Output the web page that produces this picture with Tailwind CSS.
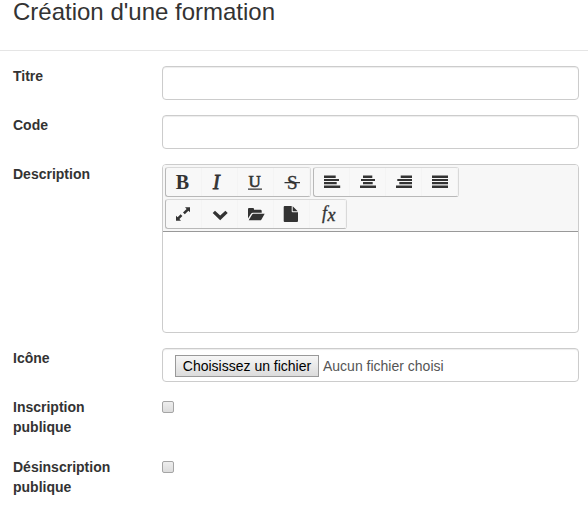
<!DOCTYPE html>
<html lang="fr">
<head>
<meta charset="utf-8">
<title>Création d'une formation</title>
<script src="https://cdn.jsdelivr.net/npm/@tailwindcss/browser@4"></script>
</head>
<body class="h-[505px] overflow-hidden bg-white font-['Liberation_Sans',Arial,sans-serif] text-sm leading-5 text-[#333]">
<header class="h-[51px] border-b border-[#e5e5e5] pl-[13px]">
  <h1 class="text-2xl leading-[24px]">Création d'une formation</h1>
</header>
<form class="flex flex-col gap-[15px] pt-[15px] pr-[9px] pl-[13px]">
  <div class="flex">
    <label class="w-[149px] shrink-0 font-bold">Titre</label>
    <input type="text" class="h-[34px] w-[417px] rounded border border-[#ccc] px-3 shadow-[inset_0_1px_1px_rgba(0,0,0,0.075)]">
  </div>
  <div class="flex">
    <label class="w-[149px] shrink-0 font-bold">Code</label>
    <input type="text" class="h-[34px] w-[417px] rounded border border-[#ccc] px-3 shadow-[inset_0_1px_1px_rgba(0,0,0,0.075)]">
  </div>
  <div class="flex">
    <label class="w-[149px] shrink-0 font-bold">Description</label>
    <div class="h-[169px] w-[417px] overflow-hidden rounded border border-[#ccc] bg-white">
      <div class="flex h-[67px] flex-wrap content-start gap-[2px] border-b border-[#999] bg-[#f7f7f7] p-[2px]">
        <div class="flex h-[30px] w-[146px] rounded-[3px] border border-[#d9d9d9] border-b-[#b8b8b8] border-l-[#b8b8b8] bg-[#f8f8f8] fill-[#333] [&>svg]:shadow-[inset_-1px_0_#f4f4f4]">
          <svg class="h-7 w-9" viewBox="0 0 36 28"><text x="9.800" y="21" class="font-['Liberation_Serif',serif] text-[20px] font-bold">B</text></svg>
          <svg class="h-7 w-9" viewBox="0 0 36 28"><text x="11" y="21" class="font-['Liberation_Serif',serif] text-[20px] italic" stroke="#333" stroke-width=".8">I</text></svg>
          <svg class="h-7 w-9" viewBox="0 0 36 28"><text x="10.500" y="19" class="font-['Liberation_Serif',serif] text-[17px]" stroke="#333" stroke-width=".6">U</text><path d="M10 20.500h14v1.200H10z"/></svg>
          <svg class="h-7 w-9" viewBox="0 0 36 28"><text x="13" y="20.500" class="font-['Liberation_Serif',serif] text-[19px]" stroke="#333" stroke-width=".4">S</text><path d="M10.500 14h15.500v1.200H10.500z"/></svg>
        </div>
        <div class="flex h-[30px] w-[146px] rounded-[3px] border border-[#d9d9d9] border-b-[#b8b8b8] border-l-[#b8b8b8] bg-[#f8f8f8] fill-[#333] [&>svg]:shadow-[inset_-1px_0_#f4f4f4]">
          <svg class="h-7 w-9" viewBox="0 0 36 28"><path d="M10 7.500h11.700V10H10zM10 11h15v2H10zM10 14h12.700v2.200H10zM10 17.500h16.200V20H10z"/></svg>
          <svg class="h-7 w-9" viewBox="0 0 36 28"><path d="M13 7.500h9.300V10H13zM11 11h14v2H11zM13 14h9.700v2.200H13zM10 17.500h16V20H10z"/></svg>
          <svg class="h-7 w-9" viewBox="0 0 36 28"><path d="M14.700 7.500H26V10H14.700zM11.300 11H26v2H11.300zM13.300 14H26v2.200H13.300zM10 17.500h16V20H10z"/></svg>
          <svg class="h-7 w-9" viewBox="0 0 36 28"><path d="M10 7.500h16V10H10zM10 11h16v2H10zM10 14h16v2.200H10zM10 17.500h16V20H10z"/></svg>
        </div>
        <div class="flex h-[30px] w-[182px] rounded-[3px] border border-[#d9d9d9] border-b-[#b8b8b8] border-l-[#b8b8b8] bg-[#f8f8f8] fill-[#333] [&>svg]:shadow-[inset_-1px_0_#f4f4f4]">
          <svg class="h-7 w-9" viewBox="0 0 36 28"><path d="M19 7.300h5v5l-1.600-1.600-3.600 3.600-1.800-1.800 3.600-3.600zM10 20.700v-5l1.600 1.600 3-3 1.800 1.800-3 3 1.600 1.600z"/></svg>
          <svg class="h-7 w-9" viewBox="0 0 36 28"><path d="M10.700 13L13 10.700l5.200 4.800L23.400 10.700l2.300 2.300-7.500 7.200z"/></svg>
          <svg class="h-7 w-9" viewBox="0 0 36 28"><path d="M10 18.500V9Q10 8 11 8H15Q16 8 16 9V9.700H22.500Q23.700 9.700 23.700 11V12.700H15Q13.700 12.700 13 13.800ZM10.700 20.300L14.300 14.300Q14.700 13.700 15.300 13.700H26.700L23.300 19.700Q22.900 20.300 22.300 20.300Z"/></svg>
          <svg class="h-7 w-9" viewBox="0 0 36 28"><path d="M9.700 7Q9.700 6 10.700 6H17.700V11.300Q17.700 12.300 18.700 12.300H24V21Q24 22 23 22H10.700Q9.700 22 9.700 21ZM18.700 6.300L23.700 11.300H18.700Z"/></svg>
          <svg class="h-7 w-9" viewBox="0 0 36 28"><text x="12" y="18.500" class="font-['Liberation_Serif',serif] text-[18px] italic" stroke="#333" stroke-width=".3">f</text><text x="17.500" y="21" class="font-['Liberation_Serif',serif] text-[18px] italic" stroke="#333" stroke-width=".4">x</text></svg>
        </div>
      </div>
    </div>
  </div>
  <div class="flex">
    <label class="w-[149px] shrink-0 font-bold">Icône</label>
    <div class="flex h-[34px] w-[417px] rounded border border-[#ccc] px-3 pt-[6px] text-[#555] shadow-[inset_0_1px_1px_rgba(0,0,0,0.075)]">
      <button type="button" class="h-[22px] w-[144px] shrink-0 border border-[#999] bg-linear-to-b from-[#f6f6f6] to-[#dcdcdc] text-center leading-5 whitespace-nowrap text-black">Choisissez un fichier</button>
      <span class="ml-1 leading-[22px]">Aucun fichier choisi</span>
    </div>
  </div>
  <div class="flex h-[45px]">
    <label class="w-[149px] shrink-0 font-bold">Inscription<br>publique</label>
    <input type="checkbox" class="mt-1 h-3 w-3 appearance-none rounded-[2px] border border-[#a5a5a5] bg-linear-to-b from-[#eee] to-[#dcdcdc]">
  </div>
  <div class="flex">
    <label class="w-[149px] shrink-0 font-bold">Désinscription<br>publique</label>
    <input type="checkbox" class="mt-1 h-3 w-3 appearance-none rounded-[2px] border border-[#a5a5a5] bg-linear-to-b from-[#eee] to-[#dcdcdc]">
  </div>
</form>
</body>
</html>
